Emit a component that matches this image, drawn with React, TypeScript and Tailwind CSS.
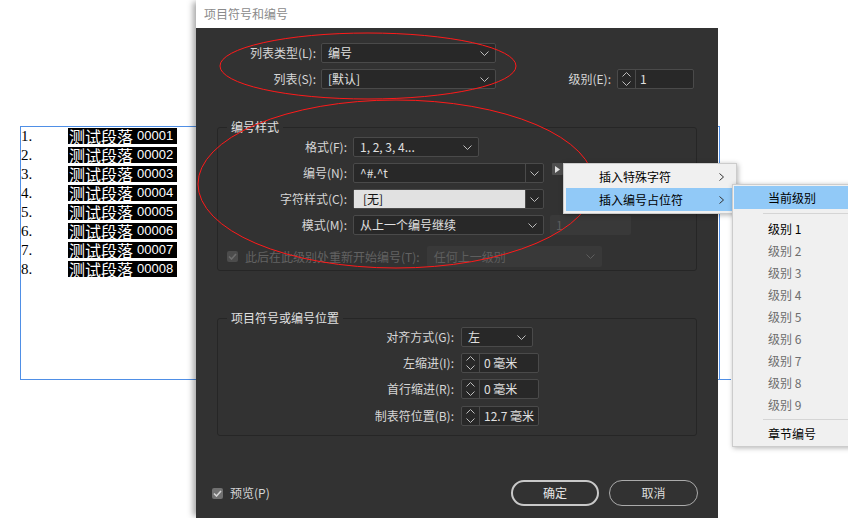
const ChevronDown = ({ c = "#bdbdbd" }: { c?: string }) => (
  <svg width="9" height="5" viewBox="0 0 9 5" className="shrink-0">
    <path d="M0.5 0.5 L4.5 4.5 L8.5 0.5" fill="none" stroke={c} strokeWidth="1" />
  </svg>
);

const ChevronUp = ({ c = "#bdbdbd" }: { c?: string }) => (
  <svg width="9" height="5" viewBox="0 0 9 5" className="shrink-0">
    <path d="M0.5 4.5 L4.5 0.5 L8.5 4.5" fill="none" stroke={c} strokeWidth="1" />
  </svg>
);

const ChevronRight = () => (
  <svg width="5" height="8" viewBox="0 0 5 8" className="shrink-0">
    <path d="M0.5 0.5 L4.5 4 L0.5 7.5" fill="none" stroke="#333" strokeWidth="1" />
  </svg>
);

const Check = ({ bg, c }: { bg: string; c: string }) => (
  <span className={`flex h-[11px] w-[11px] items-center justify-center rounded-[2px] ${bg}`}>
    <svg width="9" height="7" viewBox="0 0 9 7">
      <path d="M1 3.5 L3.5 6 L8 1" fill="none" stroke={c} strokeWidth="1.6" />
    </svg>
  </span>
);

const Select = ({ value, className = "", disabled = false }: { value: string; className?: string; disabled?: boolean }) => (
  <div
    className={`flex h-[20px] items-center justify-between rounded-[2px] border px-[6px] ${
      disabled ? "border-transparent bg-[#393939] text-[#5e5e5e]" : "border-[#4a4a4a] bg-[#282828] text-[#e0e0e0]"
    } ${className}`}
  >
    <span>{value}</span>
    <ChevronDown c={disabled ? "#5e5e5e" : "#bdbdbd"} />
  </div>
);

const Spinner = ({ value, className = "" }: { value: string; className?: string }) => (
  <div className={`flex h-[20px] rounded-[2px] border border-[#4a4a4a] bg-[#282828] text-[#e0e0e0] ${className}`}>
    <div className="flex w-[18px] flex-col items-center justify-center gap-[4px] border-r border-[#4a4a4a]">
      <ChevronUp />
      <ChevronDown />
    </div>
    <span className="pl-[4px] leading-[18px]">{value}</span>
  </div>
);

const Combo = ({ value, light = false }: { value: string; light?: boolean }) => (
  <div className="flex h-[20px] w-[191px] rounded-[2px] border border-[#4a4a4a] bg-[#282828]">
    <span className={`flex-1 leading-[18px] ${light ? "bg-[#e1e1e1] pl-[9px] text-[#111]" : "pl-[6px] text-[#e0e0e0]"}`}>{value}</span>
    <div className="flex w-[18px] items-center justify-center border-l border-[#4a4a4a]">
      <ChevronDown />
    </div>
  </div>
);

const levels = ["级别 1", "级别 2", "级别 3", "级别 4", "级别 5", "级别 6", "级别 7", "级别 8", "级别 9"];

export default function App() {
  return (
    <div className="relative h-[518px] w-[848px] overflow-hidden bg-white font-['Noto_Sans_CJK_SC',sans-serif] text-[12px] leading-[16px]">
      {/* document page behind the dialog */}
      <div className="relative ml-[20px] mt-[126px] h-[254px] w-[700px] border border-[#4f8fe6] pt-[1px] after:absolute after:-bottom-px after:left-full after:h-px after:w-[12px] after:bg-[#4f8fe6]">
        {[1, 2, 3, 4, 5, 6, 7, 8].map((n) => (
          <div key={n} className="flex h-[19px] items-start">
            <span className="w-[47px] font-['Liberation_Serif',serif] text-[15px] leading-[17px] text-black">{n}.</span>
            <span className="flex h-[16px] w-[109px] items-center bg-black pl-[1px] text-white">
              <span className="text-[16px] leading-[16px]">测试段落</span>
              <span className="ml-[4px] font-['Liberation_Sans',sans-serif] text-[13px] leading-[16px]">0000{n}</span>
            </span>
          </div>
        ))}
      </div>

      {/* dialog window */}
      <div className="absolute left-[196px] top-0 flex h-[518px] w-[522px] flex-col shadow-[-5px_0_6px_-2px_rgba(0,0,0,0.35)]">
        <div className="flex h-[28px] items-center bg-white pl-[8px] text-[#8a8a8a]">项目符号和编号</div>
        <div className="flex flex-1 flex-col bg-[#323232] pt-[15px] text-[#d6d6d6]">
          <div className="flex h-[20px] items-center">
            <span className="w-[120px] text-right">列表类型(L):</span>
            <Select value="编号" className="ml-[5px] w-[175px]" />
          </div>
          <div className="mt-[6px] flex h-[20px] items-center">
            <span className="w-[120px] text-right">列表(S):</span>
            <Select value="[默认]" className="ml-[5px] w-[175px]" />
            <span className="w-[115px] text-right">级别(E):</span>
            <Spinner value="1" className="ml-[6px] w-[77px]" />
          </div>

          <fieldset className="mx-[21px] mt-[30px] rounded-[3px] border border-[#262626] px-0 pb-[3px] pt-[2px]">
            <legend className="ml-[9px] px-[4px] leading-[16px] text-[#e0e0e0]">编号样式</legend>
            <div className="flex h-[20px] items-center">
              <span className="w-[129px] text-right">格式(F):</span>
              <Select value="1, 2, 3, 4..." className="ml-[6px] w-[126px]" />
            </div>
            <div className="mt-[6px] flex h-[20px] items-center">
              <span className="w-[129px] text-right">编号(N):</span>
              <div className="ml-[6px]">
                <Combo value="^#.^t" />
              </div>
              <span className="ml-[8px] flex h-[12px] w-[11px] items-center justify-center self-start rounded-[1px] bg-[#4e4e4e]">
                <svg width="5" height="7" viewBox="0 0 5 7">
                  <path d="M0 0 L5 3.5 L0 7 Z" fill="#e0e0e0" />
                </svg>
              </span>
            </div>
            <div className="mt-[6px] flex h-[20px] items-center">
              <span className="w-[129px] text-right">字符样式(C):</span>
              <div className="ml-[6px]">
                <Combo value="[无]" light />
              </div>
            </div>
            <div className="mt-[6px] flex h-[20px] items-center">
              <span className="w-[129px] text-right">模式(M):</span>
              <Select value="从上一个编号继续" className="ml-[6px] w-[191px]" />
              <span className="ml-[6px] h-[20px] w-[81px] rounded-[2px] bg-[#393939] pl-[6px] leading-[20px] text-[#5e5e5e]">1</span>
            </div>
            <div className="mt-[11px] flex h-[21px] items-center pl-[9px] text-[#626262]">
              <Check bg="bg-[#4c4c4c]" c="#6e6e6e" />
              <span className="ml-[7px]">此后在此级别处重新开始编号(T):</span>
              <Select value="任何上一级别" disabled className="ml-[7px] h-[21px] w-[175px]" />
            </div>
          </fieldset>

          <fieldset className="mx-[21px] mt-[39px] rounded-[3px] border border-[#262626] px-0 pb-[9px] pt-[1px]">
            <legend className="ml-[9px] px-[4px] leading-[16px] text-[#e0e0e0]">项目符号或编号位置</legend>
            <div className="flex h-[20px] items-center">
              <span className="w-[236px] text-right">对齐方式(G):</span>
              <Select value="左" className="ml-[7px] w-[72px]" />
            </div>
            <div className="mt-[6px] flex h-[20px] items-center">
              <span className="w-[236px] text-right">左缩进(I):</span>
              <Spinner value="0 毫米" className="ml-[7px] w-[78px]" />
            </div>
            <div className="mt-[6px] flex h-[20px] items-center">
              <span className="w-[236px] text-right">首行缩进(R):</span>
              <Spinner value="0 毫米" className="ml-[7px] w-[78px]" />
            </div>
            <div className="mt-[7px] flex h-[20px] items-center">
              <span className="w-[236px] text-right">制表符位置(B):</span>
              <Spinner value="12.7 毫米" className="ml-[7px] w-[78px]" />
            </div>
          </fieldset>

          <div className="mt-[44px] flex items-center pl-[16px] pr-[20px]">
            <Check bg="bg-[#717171]" c="#d4d4d4" />
            <span className="ml-[7px]">预览(P)</span>
            <div className="ml-auto flex gap-[10px]">
              <button className="h-[26px] w-[88px] rounded-full border-2 border-[#c9c9c9] text-[#e6e6e6]">确定</button>
              <button className="h-[26px] w-[89px] rounded-full border border-[#ababab] text-[#dcdcdc]">取消</button>
            </div>
          </div>
        </div>
      </div>

      {/* red annotation ellipses */}
      <svg className="pointer-events-none absolute left-0 top-0" width="848" height="518">
        <ellipse cx="368" cy="66" rx="148" ry="33" fill="none" stroke="#ff1a1a" strokeWidth="1" />
        <ellipse cx="396" cy="184" rx="198" ry="84" fill="none" stroke="#ff1a1a" strokeWidth="1" />
      </svg>

      {/* context menu */}
      <div className="absolute left-[563px] top-[163px] w-[174px] border border-[#cccccc] bg-[#f0f0f0] p-[2px] text-black shadow-[1px_1px_5px_rgba(0,0,0,0.3)]">
        <div className="flex h-[22px] items-center pl-[33px] pr-[10px]">
          <span className="flex-1">插入特殊字符</span>
          <ChevronRight />
        </div>
        <div className="flex h-[23px] items-center bg-[#91c9f7] pl-[33px] pr-[10px]">
          <span className="flex-1">插入编号占位符</span>
          <ChevronRight />
        </div>
      </div>

      {/* submenu */}
      <div className="absolute left-[732px] top-[184px] w-[130px] border border-[#cccccc] bg-[#f0f0f0] py-[1px] pl-[1px] text-black shadow-[1px_1px_5px_rgba(0,0,0,0.3)]">
        <div className="flex h-[23px] items-center bg-[#91c9f7] pl-[34px]">当前级别</div>
        <div className="my-[4px] ml-[29px] h-px bg-[#d5d5d5]" />
        {levels.map((l, i) => (
          <div key={l} className={`flex h-[22px] items-center pl-[34px] ${i === 0 ? "text-black" : "text-[#6d6d6d]"}`}>
            {l}
          </div>
        ))}
        <div className="my-[3px] ml-[29px] h-px bg-[#d5d5d5]" />
        <div className="flex h-[22px] items-center pl-[34px]">章节编号</div>
      </div>
    </div>
  );
}
